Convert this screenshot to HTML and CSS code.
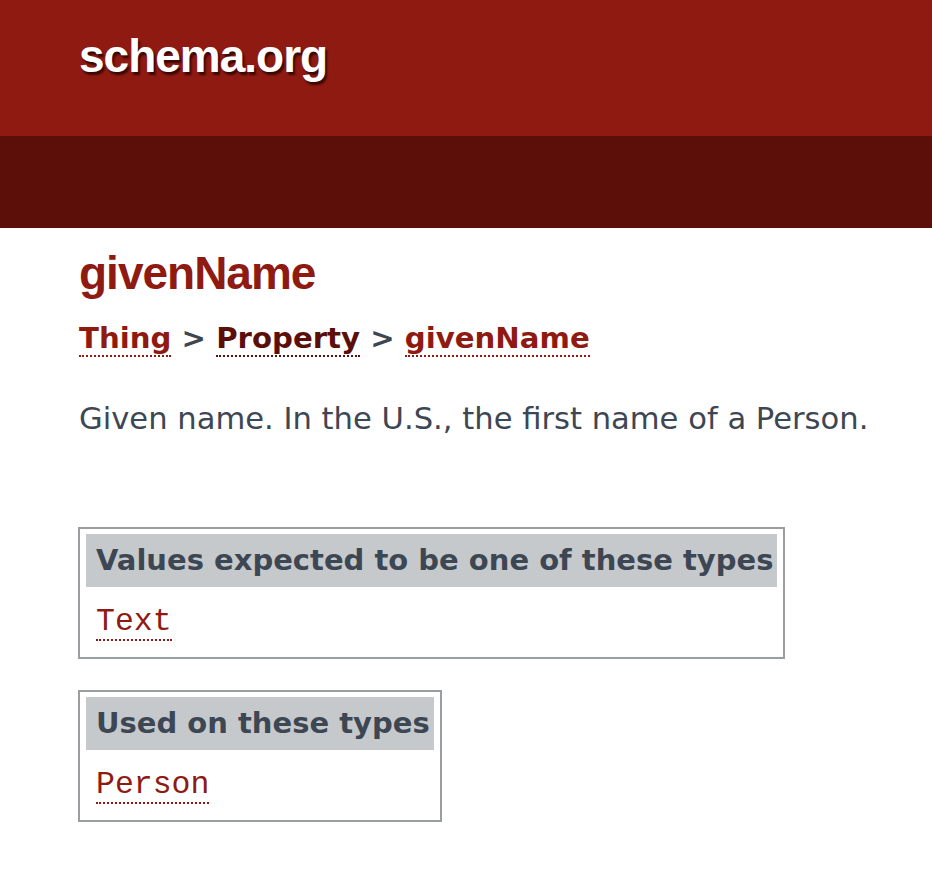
FILE: index.html
```html
<!DOCTYPE html>
<html lang="en">
<head>
  <meta charset="UTF-8" />
  <title>givenName - schema.org</title>
  <link rel="stylesheet" href="styles.css">
</head>
<body>
  <div id="header">
    <div id="site">
      <a class="logo" href="#">schema.org</a>
    </div>
    <div id="nav"></div>
  </div>

  <div id="main">
    <h1 class="page-title">givenName</h1>
    <div class="breadcrumbs">
      <a href="#">Thing</a> &gt;
      <a class="visited" href="#">Property</a> &gt;
      <a href="#">givenName</a>
    </div>

    <div class="description">Given name. In the U.S., the first name of a Person.</div>

    <table class="definition-table">
      <tr><th>Values expected to be one of these types</th></tr>
      <tr><td><code><a href="#">Text</a></code></td></tr>
    </table>

    <table class="definition-table">
      <tr><th>Used on these types</th></tr>
      <tr><td><code><a href="#">Person</a></code></td></tr>
    </table>
  </div>
</body>
</html>
```

FILE: styles.css
```css
body {
  margin: 0;
  font-family: 'DejaVu Sans', sans-serif;
  color: #3d4753;
  background: #fff;
}

#site {
  background-color: #8e1a12;
  height: 136px;
  padding-left: 79px;
}

.logo {
  display: inline-block;
  padding-top: 29px;
  font-family: 'Liberation Sans', Arial, sans-serif;
  font-weight: bold;
  font-size: 46px;
  letter-spacing: -1px;
  color: #fff;
  text-decoration: none;
  border: none;
  text-shadow: 2px 3px 2px #3a0804;
}

#nav {
  background-color: #5c0f09;
  height: 92px;
}

#main {
  padding: 0 20px 0 79px;
}

.page-title {
  font-family: 'Liberation Sans', Arial, sans-serif;
  font-size: 46px;
  letter-spacing: -1px;
  color: #8e1a12;
  margin: 18px 0 0 0;
}

a {
  color: #8e1a12;
  text-decoration: none;
  border-bottom: 2px dotted #8e1a12;
}

a.visited {
  color: #5c0f09;
  border-bottom-color: #5c0f09;
}

.breadcrumbs {
  font-weight: bold;
  font-size: 29.2px;
  margin-top: 21px;
}

.description {
  font-size: 30.6px;
  white-space: nowrap;
  margin-top: 46px;
}

.definition-table {
  border: 2px solid #9a9ea2;
  border-spacing: 6px 5px;
  margin: 0 0 31px -1px;
}

.description + .definition-table {
  margin-top: 91px;
}

.definition-table th {
  background-color: #c6c9cc;
  font-size: 29px;
  text-align: left;
  padding: 9px 4px 10px 10px;
}

.definition-table td {
  padding: 12px 10px 13px 10px;
}

code {
  font-family: 'Liberation Mono', 'Courier New', monospace;
  font-size: 31.5px;
}
```
